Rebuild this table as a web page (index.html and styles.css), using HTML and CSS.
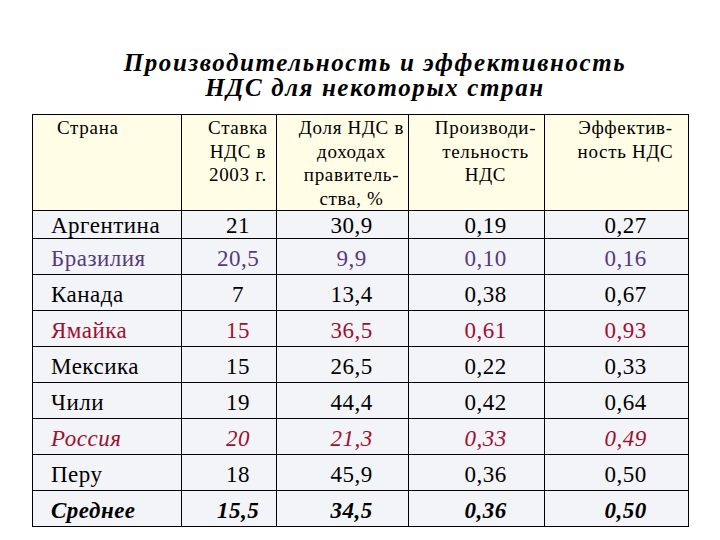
FILE: index.html
```html
<!DOCTYPE html>
<html>
<head>
<meta charset="utf-8">
<title>НДС</title>
<link rel="stylesheet" href="styles.css">
</head>
<body>
<div class="slide">
  <h1 class="title">Производительность и эффективность<br>НДС для некоторых стран</h1>
  <table class="vat">
    <colgroup>
      <col class="c1"><col class="c2"><col class="c3"><col class="c4"><col class="c5">
    </colgroup>
    <thead>
      <tr class="head">
        <th class="country-h">Страна</th>
        <th>Ставка<br>НДС в<br>2003 г.</th>
        <th>Доля НДС в<br>доходах<br>правитель-<br>ства, %</th>
        <th>Производи-<br>тельность<br>НДС</th>
        <th>Эффектив-<br>ность НДС</th>
      </tr>
    </thead>
    <tbody>
      <tr class="r-short"><td>Аргентина</td><td>21</td><td>30,9</td><td>0,19</td><td>0,27</td></tr>
      <tr class="purple"><td>Бразилия</td><td>20,5</td><td>9,9</td><td>0,10</td><td>0,16</td></tr>
      <tr><td>Канада</td><td>7</td><td>13,4</td><td>0,38</td><td>0,67</td></tr>
      <tr class="red"><td>Ямайка</td><td>15</td><td>36,5</td><td>0,61</td><td>0,93</td></tr>
      <tr><td>Мексика</td><td>15</td><td>26,5</td><td>0,22</td><td>0,33</td></tr>
      <tr><td>Чили</td><td>19</td><td>44,4</td><td>0,42</td><td>0,64</td></tr>
      <tr class="red italic"><td>Россия</td><td>20</td><td>21,3</td><td>0,33</td><td>0,49</td></tr>
      <tr><td>Перу</td><td>18</td><td>45,9</td><td>0,36</td><td>0,50</td></tr>
      <tr class="avg"><td>Среднее</td><td>15,5</td><td>34,5</td><td>0,36</td><td>0,50</td></tr>
    </tbody>
  </table>
</div>
</body>
</html>
```

FILE: styles.css
```css
html, body {
  margin: 0;
  padding: 0;
  background: #ffffff;
}

body,
.slide,
.title,
.vat,
.vat th,
.vat td {
  font-family: "Liberation Serif", "Times New Roman", serif;
}

.slide {
  width: 720px;
  height: 540px;
  color: #000;
}

.title {
  margin: 0;
  padding: 50px 0 0 30px;
  text-align: center;
  font-size: 25px;
  line-height: 25px;
  font-weight: bold;
  font-style: italic;
  letter-spacing: 1.6px;
  height: 64px;
}

.vat {
  margin-left: 32px;
  border-collapse: collapse;
  table-layout: fixed;
  width: 656px;
}

.c1 { width: 149px; }
.c2 { width: 95px; }
.c3 { width: 132px; }
.c4 { width: 136px; }
.c5 { width: 144px; }

.vat th,
.vat td {
  border: 1px solid #000;
  padding: 0 0 0 18px;
  text-align: center;
}

.head th {
  background: #fffde6;
  font-weight: normal;
  font-size: 19px;
  letter-spacing: 0.7px;
  line-height: 23.5px;
  vertical-align: top;
  height: 94px;
  padding-top: 1px;
  box-sizing: border-box;
}

.vat th.country-h {
  text-align: left;
  padding-left: 24px;
}

.vat tbody td {
  background: #f2f4f8;
  font-size: 23px;
  letter-spacing: 0.5px;
  height: 36px;
  line-height: 24px;
  padding-top: 4px;
  box-sizing: border-box;
  vertical-align: middle;
}

.vat tbody td:first-child {
  text-align: left;
  padding-left: 18px;
}

.vat tbody tr.r-short td {
  height: 28px;
  line-height: 22px;
  padding-top: 2px;
}

.purple td { color: #563a7c; }
.red td { color: #9e1030; }
.italic td { font-style: italic; }
.avg td { font-weight: bold; font-style: italic; }
```
